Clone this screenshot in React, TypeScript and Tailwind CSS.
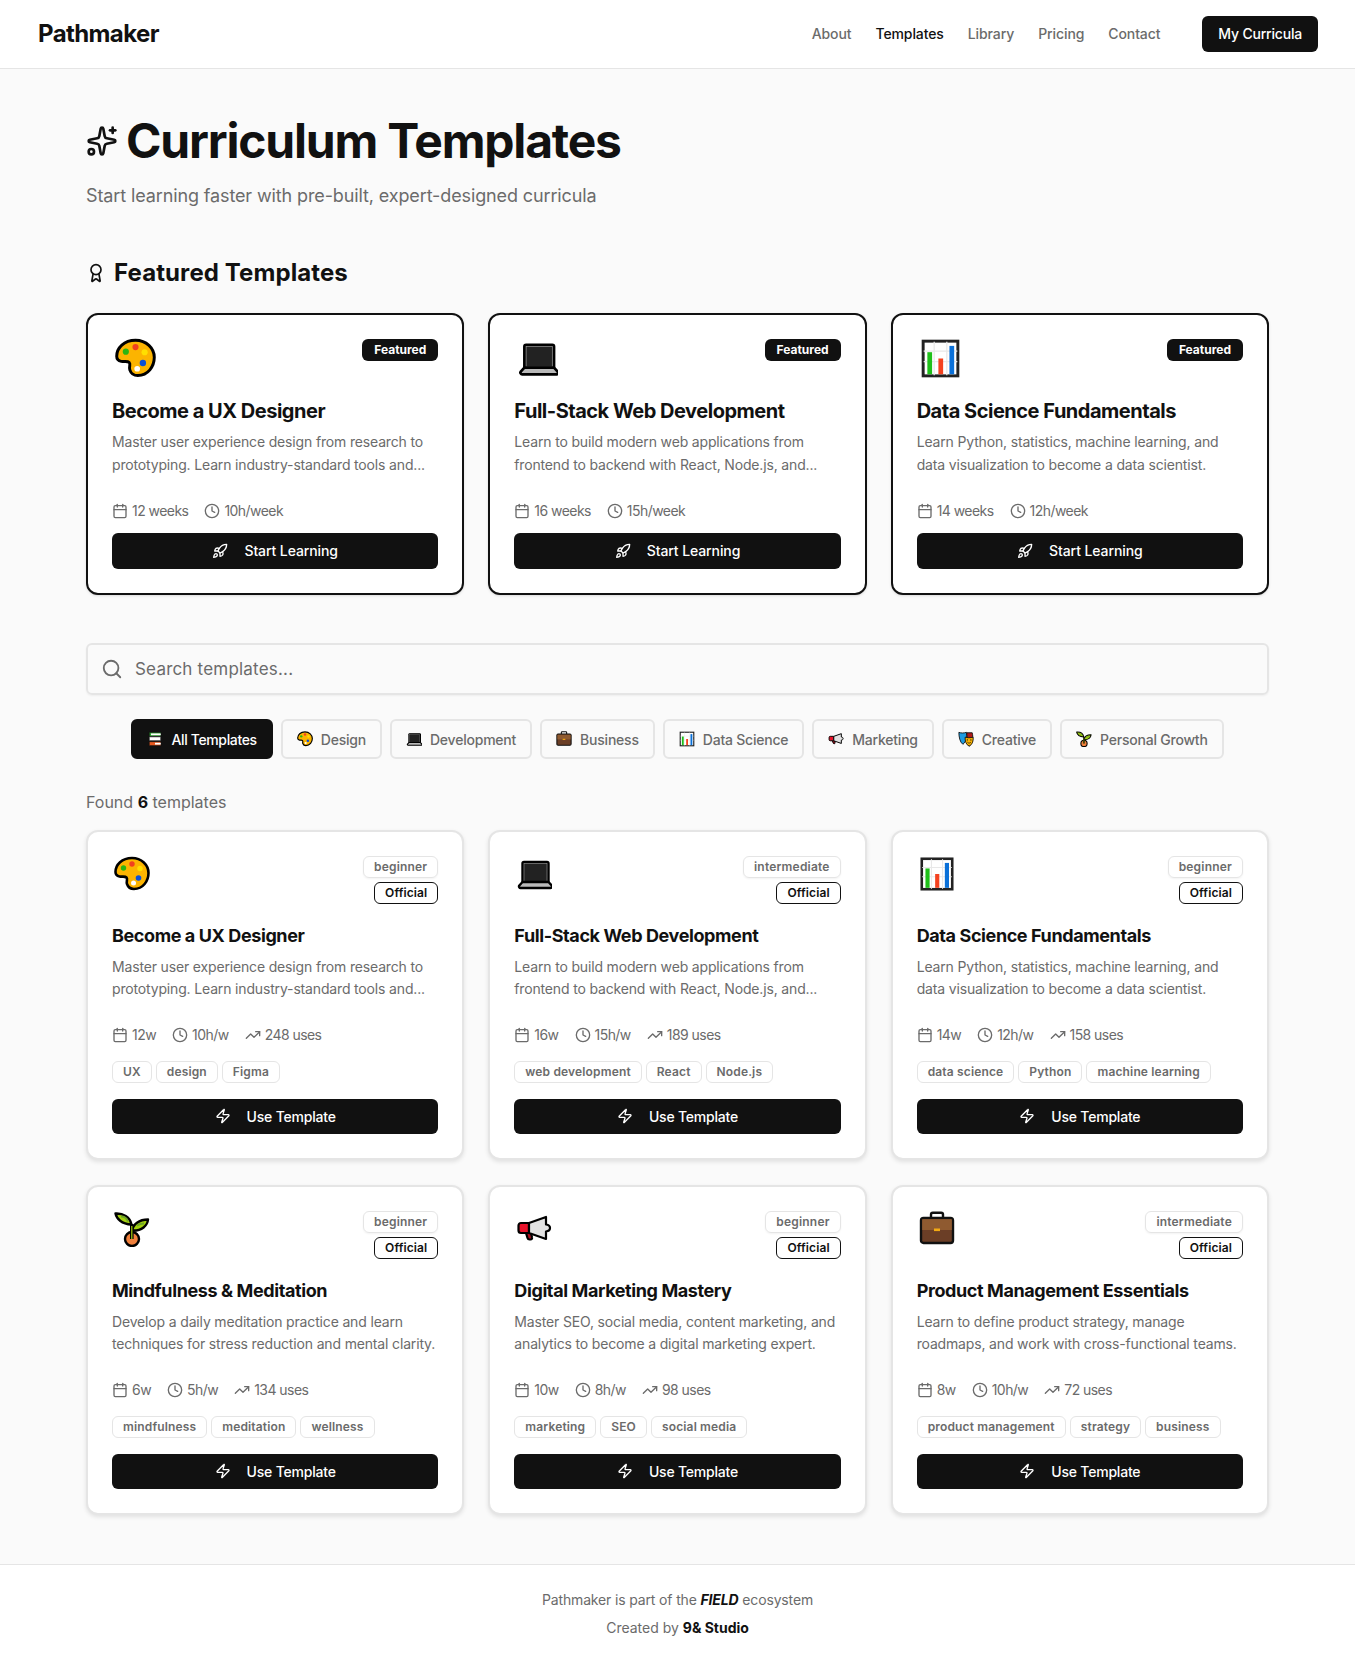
import { Award, Calendar, Clock, Rocket, Search, Sparkles, TrendingUp, Zap } from "lucide-react";

type EmojiName = "palette" | "laptop" | "chart" | "books" | "case" | "megaphone" | "masks" | "sprout";

function Emoji({ name, className }: { name: EmojiName; className: string }) {
  if (name === "palette") {
    return (
      <svg viewBox="0 0 36 36" className={className}>
        <path d="M18 2C8 2 1.500 8.500 1.500 16c0 2.500 1.500 4 4 4.500 3 .5 5.500-.5 7 1 1.500 1.500-.5 4 .5 6.500 1 3 3.500 5 7 5 9 0 14.500-8 14.500-16S27.500 2 18 2z" fill="#fcb400" stroke="#000" strokeWidth="2.600" strokeLinejoin="round" />
        <circle cx="18" cy="8" r="2.700" fill="#f1401f" />
        <circle cx="9.500" cy="12" r="2.700" fill="#2cb512" />
        <circle cx="26" cy="12.500" r="2.700" fill="#ffdf00" />
        <circle cx="24.500" cy="22" r="2.800" fill="#0a50d8" />
        <circle cx="19.500" cy="27" r="2.500" fill="#fff" />
      </svg>
    );
  }
  if (name === "laptop") {
    return (
      <svg viewBox="-1.500 -1 36 36" className={className}>
        <rect x="5" y="5" width="26" height="21" rx="1.500" fill="#1f1f1f" stroke="#000" strokeWidth="2.400" />
        <rect x="6.500" y="6.500" width="23" height="18" fill="#222" stroke="#9a9a9a" strokeWidth=".6" />
        <path d="M5 25h26l3.200 3.500c.8 1-.1 2.500-1.200 2.500H3c-1.100 0-2-1.500-1.200-2.500z" fill="#b9b9b9" stroke="#000" strokeWidth="2.400" strokeLinejoin="round" />
      </svg>
    );
  }
  if (name === "chart") {
    return (
      <svg viewBox="-1.500 -1.500 39 39" className={className}>
        <rect x="1.500" y="1.500" width="33" height="33" fill="#fff" stroke="#222" strokeWidth="2.800" />
        <path d="M2 11h32M2 21h32M12 2v32M24 2v32" stroke="#e8e8e8" strokeWidth="1.200" />
        <rect x="5.500" y="12" width="4.500" height="21" fill="#1fc01a" />
        <rect x="16" y="18" width="4.500" height="15" fill="#f4421f" />
        <rect x="26.500" y="6" width="4.500" height="27" fill="#0a70d8" />
      </svg>
    );
  }
  if (name === "books") {
    return (
      <svg viewBox="0 0 36 36" className={className}>
        <rect x="5" y="3" width="26" height="9" rx="1" fill="#2fa52f" stroke="#111" strokeWidth="1.600" />
        <rect x="9" y="5.500" width="22" height="4" fill="#fff" />
        <rect x="5" y="13" width="26" height="9" rx="1" fill="#fff" stroke="#111" strokeWidth="1.600" />
        <rect x="5" y="24" width="26" height="9" rx="1" fill="#e8591f" stroke="#111" strokeWidth="1.600" />
        <rect x="18" y="26.500" width="13" height="4" fill="#fff" />
      </svg>
    );
  }
  if (name === "case") {
    return (
      <svg viewBox="0 1 36 36" className={className}>
        <path d="M12 9V4.500c0-1 .8-1.800 1.800-1.800h8.400c1 0 1.800.8 1.800 1.800V9" fill="none" stroke="#111" strokeWidth="2.400" />
        <rect x="2" y="8" width="32" height="25" rx="2.500" fill="#6b3e26" stroke="#111" strokeWidth="2.400" />
        <path d="M3.200 9.200h29.600V20H3.200z" fill="#8f5a30" />
        <rect x="15" y="18.500" width="6" height="2.600" fill="#f4aa13" />
      </svg>
    );
  }
  if (name === "megaphone") {
    return (
      <svg viewBox="0 0 36 36" className={className}>
        <path d="M10 22l1.500 5c.3 1 1 1.500 2 1.500h1c1.200 0 1.800-1 1.500-2l-1-4.500" fill="#b01020" stroke="#000" strokeWidth="2.200" />
        <path d="M13 12H5C3.500 12 2.500 13 2.500 14.500v5C2.500 21 3.500 22 5 22h8z" fill="#e8132b" stroke="#000" strokeWidth="2.200" strokeLinejoin="round" />
        <path d="M13 12L30 6v7.500c2.500.3 4 1.500 4 3.500s-1.500 3.200-4 3.500V28l-17-6z" fill="#e2e2e2" stroke="#000" strokeWidth="2.200" strokeLinejoin="round" />
      </svg>
    );
  }
  if (name === "masks") {
    return (
      <svg viewBox="0 0 36 36" className={className}>
        <path d="M2 3c5 2 11 2 17 0 .5 10 0 21-8 27C4 25 2 13 2 3z" fill="#1e9be0" stroke="#111" strokeWidth="2" />
        <path d="M20 4h12c2 8 3 24-7 30l-5-26z" fill="#b01818" stroke="#111" strokeWidth="2" />
        <path d="M16 14c5 1.500 12 1.500 18 0 .5 8-1 16-9 20-7-3-9.500-12-9-20z" fill="#fcb400" stroke="#111" strokeWidth="2" />
        <circle cx="21" cy="20" r="1.400" fill="#111" />
        <circle cx="29" cy="20" r="1.400" fill="#111" />
        <path d="M21 25c2 3 6 3 8 0" fill="none" stroke="#111" strokeWidth="1.600" />
      </svg>
    );
  }
  return (
    <svg viewBox="0 0 36 36" className={className}>
      <path d="M17.500 13.500C16 6 9 2 1.500 2.500c1 5 6 10.500 16 11z" fill="#a4d10f" stroke="#000" strokeWidth="2.400" strokeLinejoin="round" />
      <path d="M18 19.500c1-6 7-11 16-11-.5 6-6 11.500-16 11z" fill="#a4d10f" stroke="#000" strokeWidth="2.400" strokeLinejoin="round" />
      <path d="M7 5.500c3 0 6 2 7 5M23 14.500c2.500-1.500 5-2 7-2" stroke="#6fa528" strokeWidth="2" fill="none" />
      <circle cx="18" cy="28" r="7" fill="#f0803c" stroke="#000" strokeWidth="2.400" />
      <path d="M17.800 13v15" stroke="#000" strokeWidth="3.600" />
      <path d="M17.800 15v13" stroke="#a4d10f" strokeWidth="1.200" />
    </svg>
  );
}

type Template = {
  emoji: EmojiName;
  title: string;
  lines: [string, string];
  weeks: number;
  hours: number;
  uses: number;
  level: string;
  tags: string[];
};

const featured: Template[] = [
  {
    emoji: "palette",
    title: "Become a UX Designer",
    lines: ["Master user experience design from research to", "prototyping. Learn industry-standard tools and..."],
    weeks: 12,
    hours: 10,
    uses: 248,
    level: "beginner",
    tags: ["UX", "design", "Figma"],
  },
  {
    emoji: "laptop",
    title: "Full-Stack Web Development",
    lines: ["Learn to build modern web applications from", "frontend to backend with React, Node.js, and..."],
    weeks: 16,
    hours: 15,
    uses: 189,
    level: "intermediate",
    tags: ["web development", "React", "Node.js"],
  },
  {
    emoji: "chart",
    title: "Data Science Fundamentals",
    lines: ["Learn Python, statistics, machine learning, and", "data visualization to become a data scientist."],
    weeks: 14,
    hours: 12,
    uses: 158,
    level: "beginner",
    tags: ["data science", "Python", "machine learning"],
  },
];

const templates: Template[] = [
  ...featured,
  {
    emoji: "sprout",
    title: "Mindfulness & Meditation",
    lines: ["Develop a daily meditation practice and learn", "techniques for stress reduction and mental clarity."],
    weeks: 6,
    hours: 5,
    uses: 134,
    level: "beginner",
    tags: ["mindfulness", "meditation", "wellness"],
  },
  {
    emoji: "megaphone",
    title: "Digital Marketing Mastery",
    lines: ["Master SEO, social media, content marketing, and", "analytics to become a digital marketing expert."],
    weeks: 10,
    hours: 8,
    uses: 98,
    level: "beginner",
    tags: ["marketing", "SEO", "social media"],
  },
  {
    emoji: "case",
    title: "Product Management Essentials",
    lines: ["Learn to define product strategy, manage", "roadmaps, and work with cross-functional teams."],
    weeks: 8,
    hours: 10,
    uses: 72,
    level: "intermediate",
    tags: ["product management", "strategy", "business"],
  },
];

const filters: { label: string; emoji: EmojiName }[] = [
  { label: "All Templates", emoji: "books" },
  { label: "Design", emoji: "palette" },
  { label: "Development", emoji: "laptop" },
  { label: "Business", emoji: "case" },
  { label: "Data Science", emoji: "chart" },
  { label: "Marketing", emoji: "megaphone" },
  { label: "Creative", emoji: "masks" },
  { label: "Personal Growth", emoji: "sprout" },
];

function Description({ lines }: { lines: [string, string] }) {
  return (
    <p className="text-[14px] leading-[22.4px] tracking-[-0.16px] whitespace-nowrap text-[#6b6b6b]">
      {lines[0]}
      <br />
      {lines[1]}
    </p>
  );
}

function FeaturedCard({ item }: { item: Template }) {
  return (
    <article className="flex h-[282px] flex-col rounded-xl border-2 border-[#111] bg-white p-6 shadow-sm">
      <div className="flex h-[58px] items-start justify-between">
        <Emoji name={item.emoji} className="-mt-px ml-[3px] h-[41px] w-[41px]" />
        <span className="rounded-md bg-[#111] px-3 py-[3px] text-[12px] leading-4 font-bold text-white">Featured</span>
      </div>
      <h3 className="text-[20px] leading-7 font-bold tracking-[-0.48px] text-[#111]">{item.title}</h3>
      <div className="mt-[6.4px]">
        <Description lines={item.lines} />
      </div>
      <div className="mt-[24.6px] flex items-center gap-4 text-[14px] leading-5 tracking-[-0.55px] text-[#6b6b6b]">
        <span className="flex items-center gap-1">
          <Calendar size={16} />
          {item.weeks} weeks
        </span>
        <span className="flex items-center gap-1">
          <Clock size={16} />
          {item.hours}h/week
        </span>
      </div>
      <button className="mt-3 flex h-9 items-center justify-center gap-4 rounded-md bg-[#111] text-[14px] font-medium tracking-[-0.1px] text-white">
        <Rocket size={16} />
        Start Learning
      </button>
    </article>
  );
}

function TemplateCard({ item }: { item: Template }) {
  return (
    <article className="flex h-[330px] flex-col rounded-xl border-2 border-[#e5e5e5] bg-white p-6 shadow-[0_2px_4px_rgba(0,0,0,0.1)]">
      <div className="flex h-[48px] items-start justify-between">
        <Emoji name={item.emoji} className="ml-[2px] h-[36px] w-[36px]" />
        <div className="flex flex-col items-end gap-1">
          <span className="rounded-md border border-[#e5e5e5] px-[10px] py-[2px] text-[12px] leading-4 font-semibold tracking-[0.2px] text-[#6b6b6b] shadow-xs">
            {item.level}
          </span>
          <span className="rounded-md border border-[#111] px-[10px] py-[2px] text-[12px] leading-4 font-semibold tracking-[0.1px] text-[#111]">
            Official
          </span>
        </div>
      </div>
      <h3 className="mt-[18px] text-[18px] leading-7 font-bold tracking-[-0.4px] text-[#111]">{item.title}</h3>
      <div className="mt-[6px]">
        <Description lines={item.lines} />
      </div>
      <div className="mt-6 flex items-center gap-4 text-[14px] leading-5 tracking-[-0.55px] text-[#6b6b6b]">
        <span className="flex items-center gap-1">
          <Calendar size={16} />
          {item.weeks}w
        </span>
        <span className="flex items-center gap-1">
          <Clock size={16} />
          {item.hours}h/w
        </span>
        <span className="flex items-center gap-1">
          <TrendingUp size={16} />
          {item.uses} uses
        </span>
      </div>
      <div className="mt-4 flex gap-1">
        {item.tags.map((tag) => (
          <span key={tag} className="rounded-md border border-[#e5e5e5] px-[10px] py-[2px] text-[12px] leading-4 font-semibold tracking-[0.15px] text-[#6b6b6b]">
            {tag}
          </span>
        ))}
      </div>
      <button className="mt-4 flex h-9 items-center justify-center gap-4 rounded-md bg-[#111] text-[14px] font-medium tracking-[-0.2px] text-white">
        <Zap size={16} />
        Use Template
      </button>
    </article>
  );
}

export default function App() {
  return (
    <div className="flex min-h-[1663px] flex-col bg-[#fafafa] font-['Inter',sans-serif] text-[#111]">
      <header className="flex h-[69px] items-center justify-between border-b border-[#e5e5e5] bg-white pr-[37px] pl-[38px]">
        <span className="text-[24px] font-bold tracking-[-0.6px]">Pathmaker</span>
        <nav className="flex items-center gap-6 text-[14px] font-medium tracking-[-0.1px] text-[#6b6b6b]">
          <a className="pb-0.5">About</a>
          <a className="pb-0.5 text-[#111]">Templates</a>
          <a className="pb-0.5">Library</a>
          <a className="pb-0.5">Pricing</a>
          <a className="pb-0.5">Contact</a>
          <button className="ml-[18px] h-9 rounded-md bg-[#111] px-4 pb-0.5 text-[14px] font-medium tracking-[-0.2px] text-white">My Curricula</button>
        </nav>
      </header>

      <main className="flex-1 px-[86px] pt-[42px]">
        <h1 className="flex items-center gap-2 text-[48px] leading-[60px] font-bold tracking-[-1.2px]">
          <Sparkles size={32} />
          Curriculum Templates
        </h1>
        <p className="mt-[11px] text-[18px] leading-7 tracking-[-0.12px] text-[#6b6b6b]">Start learning faster with pre-built, expert-designed curricula</p>

        <h2 className="mt-[47px] flex items-center gap-2 text-[24px] leading-8 font-bold tracking-[0.1px]">
          <Award size={20} />
          Featured Templates
        </h2>
        <div className="mt-6 grid grid-cols-3 gap-6">
          {featured.map((item) => (
            <FeaturedCard key={item.title} item={item} />
          ))}
        </div>

        <div className="mt-12 flex h-[52px] items-center gap-3 rounded-md border-2 border-[#e5e5e5] px-[13px] text-[#6b6b6b] shadow-xs">
          <Search size={22} />
          <span className="pt-px text-[17px] tracking-[0.2px]">Search templates...</span>
        </div>

        <div className="mt-6 flex justify-center gap-2">
          {filters.map((filter, i) => (
            <button
              key={filter.label}
              className={
                i === 0
                  ? "flex h-10 items-center gap-2 rounded-md border-2 border-[#111] bg-[#111] px-[14px] text-[14px] font-medium tracking-[-0.35px] text-white"
                  : "flex h-10 items-center gap-2 rounded-md border-2 border-[#e5e5e5] px-[14px] text-[14px] font-medium tracking-[-0.22px] text-[#6b6b6b]"
              }
            >
              <Emoji name={filter.emoji} className="h-4 w-4" />
              {filter.label}
            </button>
          ))}
        </div>

        <p className="mt-[31px] text-[16px] leading-6 text-[#6b6b6b]">
          Found <strong className="font-bold text-[#111]">6</strong> templates
        </p>

        <div className="mt-4 grid grid-cols-3 gap-x-6 gap-y-[25px]">
          {templates.map((item) => (
            <TemplateCard key={item.title} item={item} />
          ))}
        </div>
      </main>

      <footer className="mt-[49px] h-[99px] border-t border-[#e5e5e5] bg-white pt-[21px] text-center text-[14px] leading-[27.5px] text-[#6b6b6b]">
        <p className="tracking-[-0.15px]">
          Pathmaker is part of the <em className="font-bold text-[#111]">FIELD</em> ecosystem
        </p>
        <p>
          Created by <strong className="font-bold text-[#111]">9& Studio</strong>
        </p>
      </footer>
    </div>
  );
}
